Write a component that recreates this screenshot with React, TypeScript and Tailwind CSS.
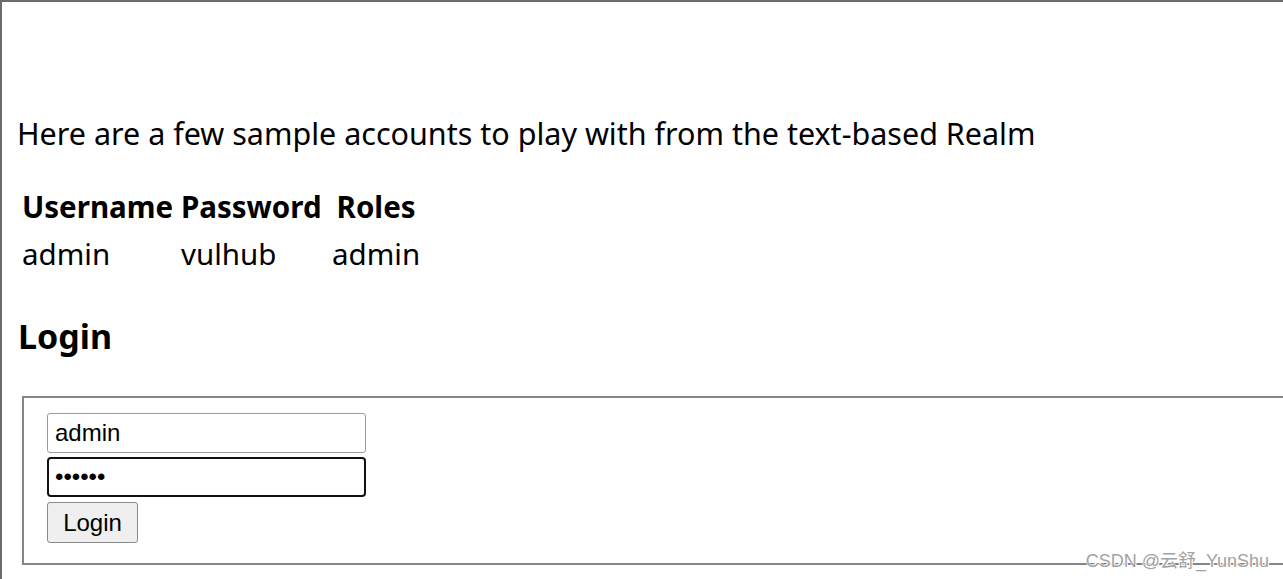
import React from "react";

export default function App() {
  const body = { fontFamily: '"Noto Sans", "Open Sans", sans-serif' };
  const arial = { fontFamily: '"Liberation Sans", Arial, sans-serif' };
  return (
    <div className="relative w-[1283px] h-[579px] overflow-hidden bg-white border-t-2 border-l-2 border-[#6b6b6b] text-black" style={body}>
      <p className="mt-[111px] pl-[15px] text-[30.5px] leading-[40px] whitespace-nowrap">
        Here are a few sample accounts to play with from the text-based Realm
      </p>
      <table className="mt-[29px] ml-[15px] border-separate border-spacing-[3px] text-[29.5px] leading-[40px]">
        <thead>
          <tr>
            <th className="p-[2px] w-[156px] text-left font-bold">Username</th>
            <th className="p-[2px] w-[148px] text-left font-bold">Password</th>
            <th className="p-[2px] text-center font-bold">Roles</th>
          </tr>
        </thead>
        <tbody>
          <tr>
            <td className="p-[2px]">admin</td>
            <td className="p-[2px]">vulhub</td>
            <td className="p-[2px]">admin</td>
          </tr>
        </tbody>
      </table>
      <h2 className="mt-[37px] pl-[16px] text-[34px] leading-[40px] font-bold">Login</h2>
      <div className="mt-[40px] ml-[20px] w-[1290px] border-2 border-[#858585] pt-[15px] pl-[23px] pb-[20px]">
        <div className="flex flex-col gap-[4px] items-start" style={arial}>
          <input
            readOnly
            defaultValue="admin"
            className="w-[319px] h-[40px] border border-[#9a9a9a] rounded-[3px] px-[7px] text-[24px] text-black bg-white outline-none"
            style={arial}
          />
          <input
            readOnly
            type="password"
            defaultValue="vulhub"
            className="w-[319px] h-[40px] border-2 border-[#111] rounded-[4px] px-[6px] text-[24px] text-black bg-white outline-none"
            style={arial}
          />
          <button
            className="mt-[1px] w-[91px] h-[41px] border border-[#8a8a8a] rounded-[3px] bg-[#efefef] text-[24px] text-black"
            style={arial}
          >
            Login
          </button>
        </div>
      </div>
      <div
        className="absolute right-[14px] bottom-[8px] text-[18px] leading-[20px] text-[#a3a3a3] whitespace-nowrap [text-shadow:0_0_1px_#fff,1px_1px_0_#fff,-1px_-1px_0_#fff]"
        style={{ fontFamily: '"Liberation Sans", "Noto Sans CJK SC", sans-serif' }}
      >
        CSDN @云舒_YunShu
      </div>
    </div>
  );
}
